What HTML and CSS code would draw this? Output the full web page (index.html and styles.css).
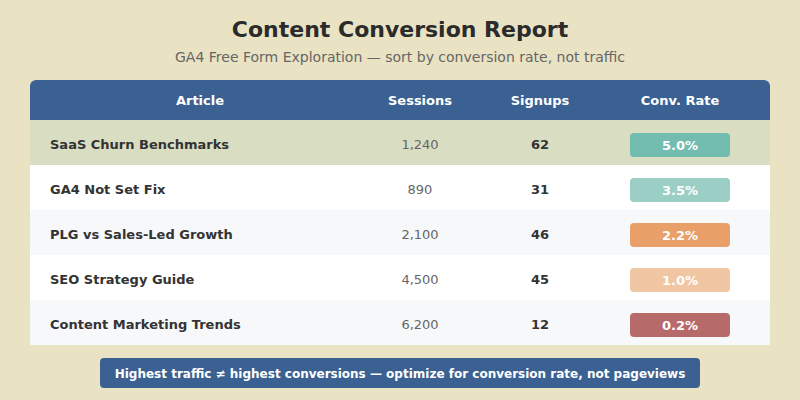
FILE: index.html
```html
<!DOCTYPE html>
<html>
<head>
<meta charset="utf-8">
<link rel="stylesheet" href="styles.css">
</head>
<body>
<div class="page">
  <h1 class="title">Content Conversion Report</h1>
  <p class="subtitle">GA4 Free Form Exploration — sort by conversion rate, not traffic</p>
  <div class="table">
    <div class="row head">
      <div class="c-article">Article</div>
      <div class="c-num">Sessions</div>
      <div class="c-num">Signups</div>
      <div class="c-num">Conv. Rate</div>
    </div>
    <div class="row hl">
      <div class="c-article name">SaaS Churn Benchmarks</div>
      <div class="c-num sess">1,240</div>
      <div class="c-num sign">62</div>
      <div class="c-num"><span class="badge b1">5.0%</span></div>
    </div>
    <div class="row white">
      <div class="c-article name">GA4 Not Set Fix</div>
      <div class="c-num sess">890</div>
      <div class="c-num sign">31</div>
      <div class="c-num"><span class="badge b2">3.5%</span></div>
    </div>
    <div class="row alt">
      <div class="c-article name">PLG vs Sales-Led Growth</div>
      <div class="c-num sess">2,100</div>
      <div class="c-num sign">46</div>
      <div class="c-num"><span class="badge b3">2.2%</span></div>
    </div>
    <div class="row white">
      <div class="c-article name">SEO Strategy Guide</div>
      <div class="c-num sess">4,500</div>
      <div class="c-num sign">45</div>
      <div class="c-num"><span class="badge b4">1.0%</span></div>
    </div>
    <div class="row alt">
      <div class="c-article name">Content Marketing Trends</div>
      <div class="c-num sess">6,200</div>
      <div class="c-num sign">12</div>
      <div class="c-num"><span class="badge b5">0.2%</span></div>
    </div>
  </div>
  <div class="note">Highest traffic ≠ highest conversions — optimize for conversion rate, not pageviews</div>
</div>
</body>
</html>
```
FILE: styles.css
```css
html, body {
  margin: 0;
  padding: 0;
  background: #e9e2c3;
}
body {
  width: 800px;
  height: 400px;
  overflow: hidden;
  font-family: "DejaVu Sans", sans-serif;
}
.page {
  display: flex;
  flex-direction: column;
  align-items: center;
  padding-top: 16px;
}
.title {
  margin: 0;
  font-size: 22px;
  line-height: 28px;
  font-weight: bold;
  color: #2b2b2b;
}
.subtitle {
  margin: 4px 0 0;
  font-size: 14px;
  line-height: 18px;
  color: #666;
}
.table {
  margin-top: 14px;
  width: 740px;
  display: flex;
  flex-direction: column;
}
.row {
  display: grid;
  grid-template-columns: 340px 100px 140px 140px 20px;
  align-items: center;
  height: 45px;
  box-sizing: border-box;
  padding-top: 3px;
  font-size: 13px;
}
.row.head {
  height: 40px;
  padding-top: 0;
  background: #3a6192;
  color: #fff;
  font-weight: bold;
  border-radius: 6px 6px 0 0;
}
.head .c-article { text-align: center; }
.row.hl { background: #d9ddc1; }
.row.white { background: #ffffff; }
.row.alt { background: #f7f8fa; }
.c-num { text-align: center; }
.name {
  padding-left: 20px;
  font-weight: bold;
  color: #333;
}
.sess { color: #666; }
.sign { font-weight: bold; color: #333; }
.badge {
  display: inline-block;
  width: 100px;
  height: 24px;
  box-sizing: border-box;
  padding-top: 2px;
  line-height: 22px;
  margin-top: 2px;
  border-radius: 4px;
  color: #fff;
  font-weight: bold;
  font-size: 13px;
}
.b1 { background: #72bdb0; }
.b2 { background: #9bcfc5; }
.b3 { background: #e8a068; }
.b4 { background: #f0c6a3; }
.b5 { background: #b76a6a; }
.note {
  margin-top: 13px;
  width: 600px;
  height: 30px;
  box-sizing: border-box;
  padding-top: 2px;
  line-height: 28px;
  text-align: center;
  background: #3a6192;
  color: #fff;
  font-weight: bold;
  font-size: 12px;
  border-radius: 4px;
}
```
